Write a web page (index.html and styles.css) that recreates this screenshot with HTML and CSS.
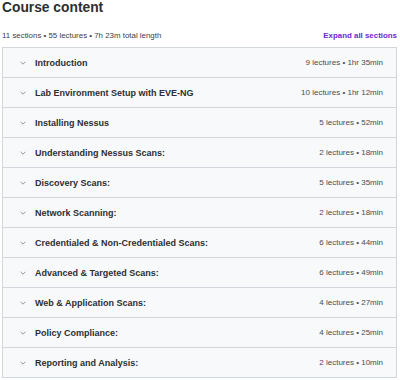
FILE: index.html
```html
<!DOCTYPE html>
<html lang="en">
<head>
  <meta charset="UTF-8" />
  <title>Course content</title>
  <link rel="stylesheet" href="styles.css">
</head>
<body>
  <div class="curriculum">
    <h2 class="title">Course content</h2>
    <div class="summary">
      <span>11 sections • 55 lectures • 7h 23m total length</span>
      <a class="expand" href="#">Expand all sections</a>
    </div>
    <div class="sections">
      <div class="section">
        <span class="chevron"><svg viewBox="0 0 10 6" width="6" height="4"><path d="M1 1l4 4 4-4" /></svg></span>
        <span class="name">Introduction</span>
        <span class="meta">9 lectures • 1hr 35min</span>
      </div>
      <div class="section">
        <span class="chevron"><svg viewBox="0 0 10 6" width="6" height="4"><path d="M1 1l4 4 4-4" /></svg></span>
        <span class="name">Lab Environment Setup with EVE-NG</span>
        <span class="meta">10 lectures • 1hr 12min</span>
      </div>
      <div class="section">
        <span class="chevron"><svg viewBox="0 0 10 6" width="6" height="4"><path d="M1 1l4 4 4-4" /></svg></span>
        <span class="name">Installing Nessus</span>
        <span class="meta">5 lectures • 52min</span>
      </div>
      <div class="section">
        <span class="chevron"><svg viewBox="0 0 10 6" width="6" height="4"><path d="M1 1l4 4 4-4" /></svg></span>
        <span class="name">Understanding Nessus Scans:</span>
        <span class="meta">2 lectures • 18min</span>
      </div>
      <div class="section">
        <span class="chevron"><svg viewBox="0 0 10 6" width="6" height="4"><path d="M1 1l4 4 4-4" /></svg></span>
        <span class="name">Discovery Scans:</span>
        <span class="meta">5 lectures • 35min</span>
      </div>
      <div class="section">
        <span class="chevron"><svg viewBox="0 0 10 6" width="6" height="4"><path d="M1 1l4 4 4-4" /></svg></span>
        <span class="name">Network Scanning:</span>
        <span class="meta">2 lectures • 18min</span>
      </div>
      <div class="section">
        <span class="chevron"><svg viewBox="0 0 10 6" width="6" height="4"><path d="M1 1l4 4 4-4" /></svg></span>
        <span class="name">Credentialed &amp; Non-Credentialed Scans:</span>
        <span class="meta">6 lectures • 44min</span>
      </div>
      <div class="section">
        <span class="chevron"><svg viewBox="0 0 10 6" width="6" height="4"><path d="M1 1l4 4 4-4" /></svg></span>
        <span class="name">Advanced &amp; Targeted Scans:</span>
        <span class="meta">6 lectures • 49min</span>
      </div>
      <div class="section">
        <span class="chevron"><svg viewBox="0 0 10 6" width="6" height="4"><path d="M1 1l4 4 4-4" /></svg></span>
        <span class="name">Web &amp; Application Scans:</span>
        <span class="meta">4 lectures • 27min</span>
      </div>
      <div class="section">
        <span class="chevron"><svg viewBox="0 0 10 6" width="6" height="4"><path d="M1 1l4 4 4-4" /></svg></span>
        <span class="name">Policy Compliance:</span>
        <span class="meta">4 lectures • 25min</span>
      </div>
      <div class="section">
        <span class="chevron"><svg viewBox="0 0 10 6" width="6" height="4"><path d="M1 1l4 4 4-4" /></svg></span>
        <span class="name">Reporting and Analysis:</span>
        <span class="meta">2 lectures • 10min</span>
      </div>
    </div>
  </div>
</body>
</html>
```

FILE: styles.css
```css
* {
  box-sizing: border-box;
  margin: 0;
  padding: 0;
}
body {
  background-color: #fff;
  font-family: 'Liberation Sans', Arial, sans-serif;
  color: #2d2f31;
}
.curriculum {
  padding: 0 3px 0 2px;
}
.title {
  font-size: 13.8px;
  line-height: 16px;
  font-weight: 700;
  color: #2d2f31;
}
.summary {
  display: flex;
  justify-content: space-between;
  align-items: center;
  height: 31px;
  padding-top: 8px;
  font-size: 7.9px;
  color: #3e4143;
}
.expand {
  color: #6d28d2;
  font-weight: 700;
  font-size: 7.9px;
  text-decoration: none;
}
.sections {
  border: 1px solid #d1d7dc;
}
.section {
  display: flex;
  align-items: center;
  height: 30px;
  padding: 0 13px 0 17px;
  background-color: #f7f9fa;
  border-top: 1px solid #d1d7dc;
}
.section:first-child {
  border-top: none;
  height: 29px;
}
.chevron {
  display: flex;
  width: 15px;
}
.chevron svg {
  fill: none;
  stroke: #6a6f73;
  stroke-width: 1.2;
}
.name {
  flex: 1;
  font-size: 9px;
  font-weight: 700;
  color: #2d2f31;
}
.meta {
  font-size: 8px;
  color: #4a4d50;
}
```
